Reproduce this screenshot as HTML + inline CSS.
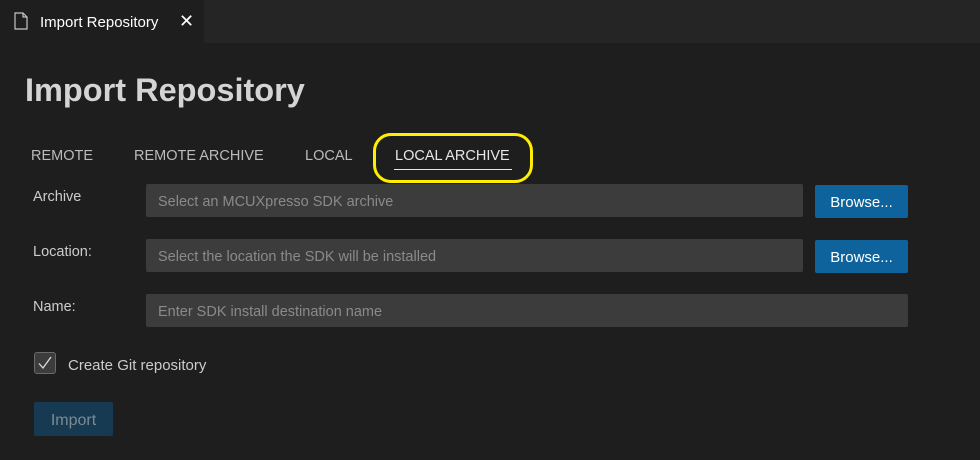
<!DOCTYPE html>
<html><head><style>
body{margin:0;width:980px;height:460px;background:#1e1e1e;font-family:"Liberation Sans",sans-serif;position:relative;overflow:hidden;color:#ccc}
.a{position:absolute}
.bar{left:0;top:0;width:980px;height:43px;background:#252526}
.tab{left:0;top:0;width:204px;height:43px;background:#1e1e1e}
.in{background:#3c3c3c;border-radius:2px;height:33px;color:#8a8a8a;font-size:14.5px;line-height:36px;padding-left:12px;box-sizing:border-box}
.btn{background:#0e639c;border-radius:2px;color:#fff;font-size:15px;text-align:center;line-height:36px;width:93px;height:33px}
.lbl{font-size:14.5px;color:#ccc}
.t{font-size:14.5px;color:#bbb;top:148px}
</style></head><body>
<div class="a bar"></div><div class="a tab"></div>
<svg class="a" style="left:14px;top:12px" width="14" height="18" viewBox="0 0 14 18"><path d="M1 1H9L13 5V17H1Z M9 1V5H13" fill="none" stroke="#c5c5c5" stroke-width="1.2"/></svg>
<div class="a" style="left:40px;top:14px;font-size:15px;color:#fff">Import Repository</div>
<div class="a" style="left:179px;top:11px;font-size:18px;color:#fff">✕</div>
<div class="a" style="left:25px;top:72px;font-size:32.5px;font-weight:bold;color:#d4d4d4">Import Repository</div>
<div class="a t" style="left:31px">REMOTE</div>
<div class="a t" style="left:134px">REMOTE ARCHIVE</div>
<div class="a t" style="left:305px">LOCAL</div>
<div class="a t" style="left:395px;color:#e7e7e7">LOCAL ARCHIVE</div>
<div class="a" style="left:394px;top:169px;width:118px;height:1px;background:#e7e7e7"></div>
<div class="a" style="left:373px;top:133px;width:160px;height:50px;border:3px solid #ffee00;border-radius:18px;box-sizing:border-box"></div>
<div class="a lbl" style="left:33px;top:189px">Archive</div>
<div class="a in" style="left:146px;top:184px;width:657px">Select an MCUXpresso SDK archive</div>
<div class="a btn" style="left:815px;top:185px">Browse...</div>
<div class="a lbl" style="left:33px;top:244px">Location:</div>
<div class="a in" style="left:146px;top:239px;width:657px">Select the location the SDK will be installed</div>
<div class="a btn" style="left:815px;top:240px">Browse...</div>
<div class="a lbl" style="left:33px;top:299px">Name:</div>
<div class="a in" style="left:146px;top:294px;width:762px">Enter SDK install destination name</div>
<div class="a" style="left:34px;top:352px;width:22px;height:22px;background:#3c3c3c;border:1px solid #6a6a6a;border-radius:3px;box-sizing:border-box"></div>
<svg class="a" style="left:34px;top:352px" width="22" height="22"><path d="M5 11.5L9 16L17 5" fill="none" stroke="#ddd" stroke-width="1.3"/></svg>
<div class="a lbl" style="left:68px;top:357px;font-size:15px">Create Git repository</div>
<div class="a" style="left:34px;top:402px;width:79px;height:34px;background:#153a52;border-radius:2px;color:#7f8a92;font-size:16px;text-align:center;line-height:37px">Import</div>
</body></html>
